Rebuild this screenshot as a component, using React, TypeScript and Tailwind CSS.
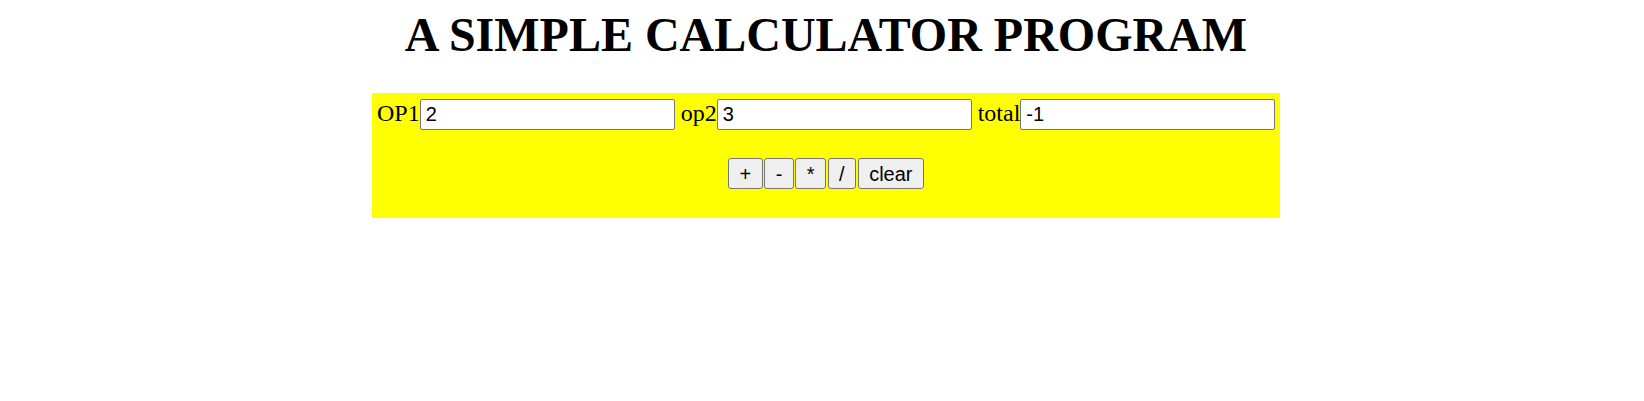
import React from "react";

const inputCls =
  "w-[255px] h-[31px] border border-[#767676] rounded-[2px] bg-white px-[5px] text-[20px] text-black outline-none font-['Liberation_Sans',Arial,sans-serif]";
const btnCls =
  "h-[31px] border border-[#767676] rounded-[3px] bg-[#efefef] px-[10.5px] text-[20px] text-black leading-none font-['Liberation_Sans',Arial,sans-serif]";

export default function App() {
  return (
    <div className="w-full pl-[8px] bg-white flex flex-col items-center font-['Liberation_Serif','Times_New_Roman',serif]">
      <h1 className="mt-[11px] text-[48px] font-bold leading-[48px] text-black">
        A SIMPLE CALCULATOR PROGRAM
      </h1>
      <div className="mt-[34px] w-[908px] bg-[#ffff00] pt-[2px] pb-[29px] px-[5px] flex flex-col">
        <div className="flex items-baseline text-[24px] text-black">
          <span>OP1</span>
          <input className={inputCls} defaultValue="2" />
          <span className="ml-[6px]">op2</span>
          <input className={inputCls} defaultValue="3" />
          <span className="ml-[6px]">total</span>
          <input className={inputCls} defaultValue="-1" />
        </div>
        <div className="mt-[27px] flex justify-center gap-[1.5px]">
          <button className={btnCls}>+</button>
          <button className={btnCls}>-</button>
          <button className={btnCls}>*</button>
          <button className={btnCls}>/</button>
          <button className={btnCls}>clear</button>
        </div>
      </div>
    </div>
  );
}
